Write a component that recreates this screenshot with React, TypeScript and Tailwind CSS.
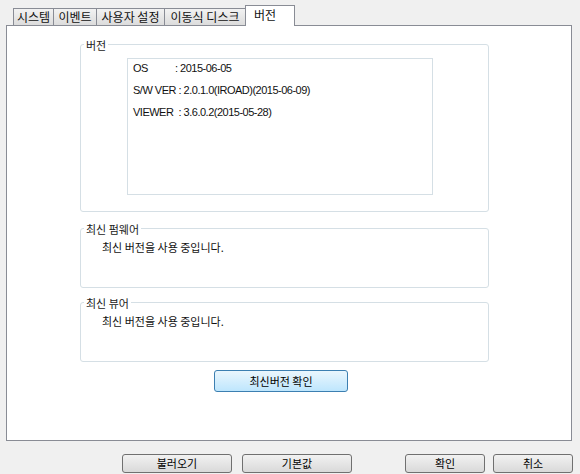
import React from "react";

const kr = "font-['Noto_Sans_CJK_KR','Noto_Sans',sans-serif]";
const latin = "font-['Liberation_Sans','DejaVu_Sans',sans-serif]";

const tabs = [
  { label: "시스템", w: "w-[41px]" },
  { label: "이벤트", w: "w-[44px]" },
  { label: "사용자 설정", w: "w-[69px]" },
  { label: "이동식 디스크", w: "w-[82px]" },
];

const GroupBox = ({
  title,
  className,
  children,
}: {
  title: string;
  className?: string;
  children: React.ReactNode;
}) => (
  <fieldset className={`mx-[73px] w-[409px] rounded-[3px] border border-[#d5dfe5] ${className ?? ""}`}>
    <legend className={`ml-[3px] px-[2px] text-[11px] leading-[14px] text-[#222] ${kr}`}>{title}</legend>
    {children}
  </fieldset>
);

const WinButton = ({ label, w }: { label: string; w: string }) => (
  <button
    className={`${w} h-[19px] rounded-[3px] border border-[#707070] bg-gradient-to-b from-[#f2f2f2] to-[#d9d9d9] text-[11px] leading-[17px] text-black ${kr}`}
  >
    {label}
  </button>
);

export default function App() {
  return (
    <div className="w-[580px] h-[474px] bg-[#f0f0f0] flex flex-col">
      {/* tabs */}
      <div className="flex items-end h-[25px] pl-[13px]">
        {tabs.map((t) => (
          <div
            key={t.label}
            className={`${t.w} h-[17px] -ml-px first:ml-0 border border-b-0 border-[#898c95] bg-gradient-to-b from-[#f2f2f2] to-[#dcdcdc] text-center text-[12px] leading-[16px] text-[#111] ${kr}`}
          >
            {t.label}
          </div>
        ))}
        <div
          className={`relative z-10 w-[50px] h-[21px] -mb-px -ml-[1px] border border-b-0 border-[#898c95] bg-white pl-[8px] text-[12px] leading-[18px] text-[#111] ${kr}`}
        >
          버전
        </div>
      </div>

      {/* panel */}
      <div className="ml-[6px] w-[566px] h-[417px] border border-[#898c95] bg-white flex flex-col">
        <GroupBox title="버전" className="mt-[12px] h-[174px] pt-[6px]">
          <div
            className={`ml-[46px] w-[306px] h-[137px] border border-[#d5dfe5] pl-[5px] pt-[1px] space-y-[6px] text-[11px] leading-[16px] tracking-[-0.5px] text-[#111] ${latin}`}
          >
            <div>
              <span className="inline-block w-[42px]">OS</span>: 2015-06-05
            </div>
            <div>S/W VER : 2.0.1.0(IROAD)(2015-06-09)</div>
            <div>VIEWER&nbsp; : 3.6.0.2(2015-05-28)</div>
          </div>
        </GroupBox>

        <GroupBox title="최신 펌웨어" className="mt-[10px] h-[66px]">
          <div className={`pl-[21px] pt-[4px] text-[11px] leading-[14px] text-[#111] ${kr}`}>최신 버전을 사용 중입니다.</div>
        </GroupBox>

        <GroupBox title="최신 뷰어" className="mt-[8px] h-[66px]">
          <div className={`pl-[21px] pt-[4px] text-[11px] leading-[14px] text-[#111] ${kr}`}>최신 버전을 사용 중입니다.</div>
        </GroupBox>

        <div className="mt-[8px] flex justify-center pr-[16px]">
          <button
            className={`w-[134px] h-[22px] rounded-[3px] border border-[#3c7fb1] bg-gradient-to-b from-[#eaf6fd] to-[#bee6fd] text-[11px] leading-[20px] text-black ${kr}`}
          >
            최신버전 확인
          </button>
        </div>
      </div>

      {/* bottom buttons */}
      <div className="mt-[9px] flex">
        <div className="ml-[122px]">
          <WinButton label="불러오기" w="w-[110px]" />
        </div>
        <div className="ml-[10px]">
          <WinButton label="기본값" w="w-[110px]" />
        </div>
        <div className="ml-[53px]">
          <WinButton label="확인" w="w-[80px]" />
        </div>
        <div className="ml-[8px]">
          <WinButton label="취소" w="w-[80px]" />
        </div>
      </div>
    </div>
  );
}
